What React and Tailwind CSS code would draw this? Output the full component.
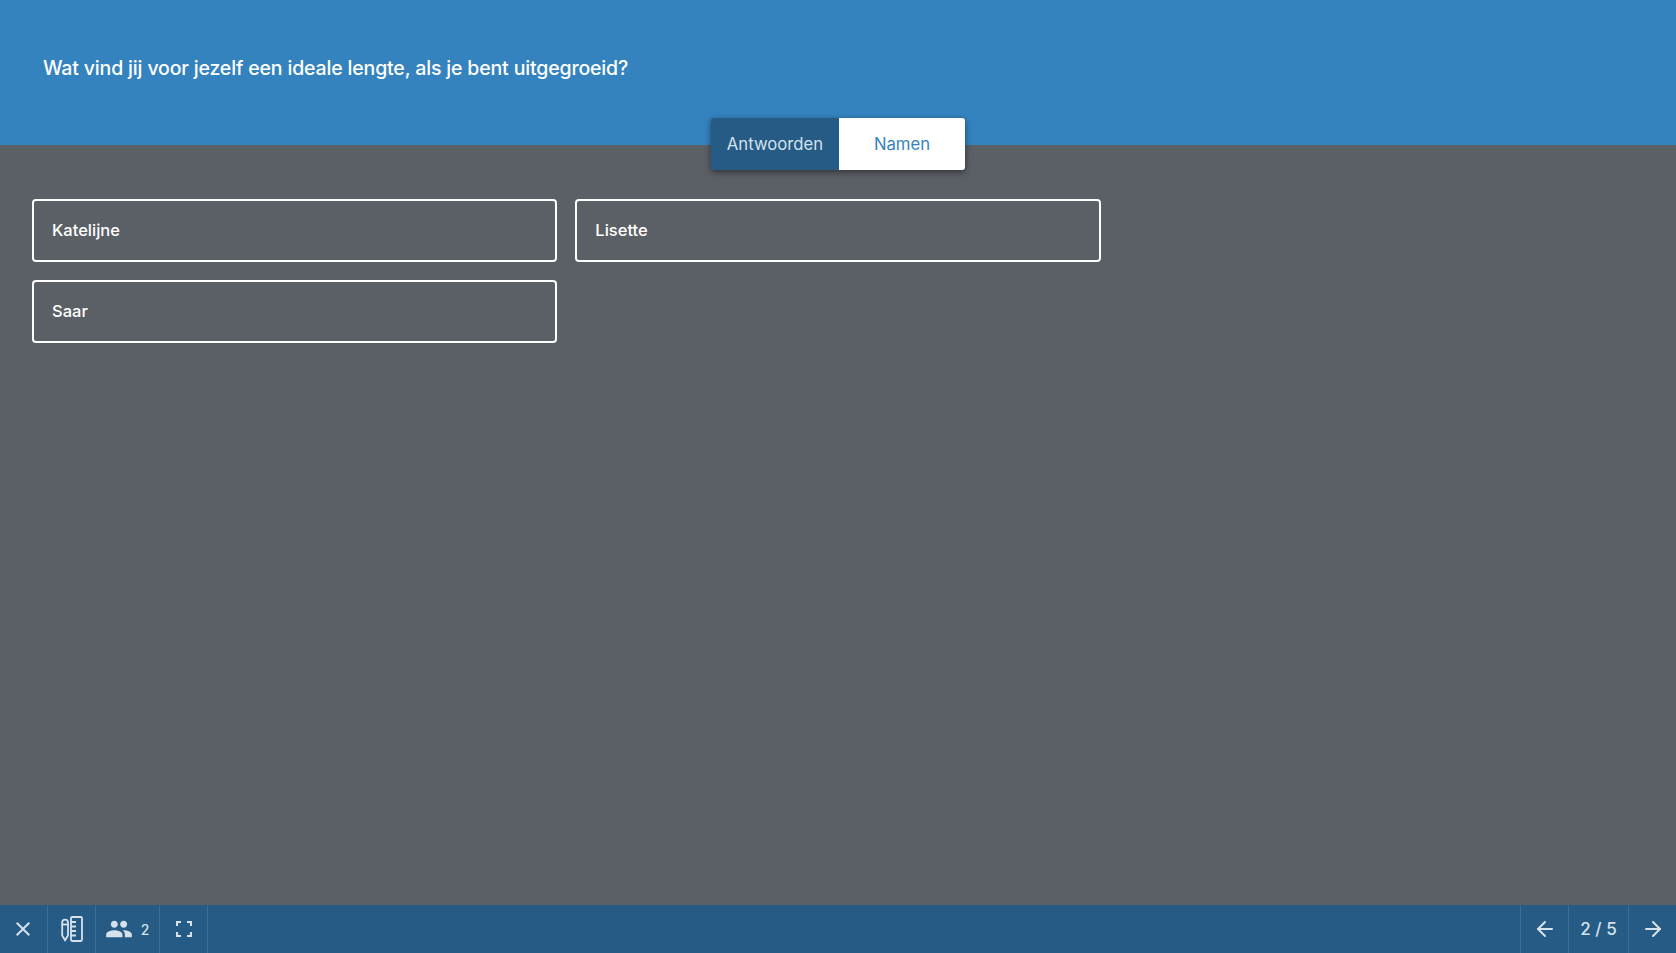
import React from 'react';
import { ArrowLeft, ArrowRight } from 'lucide-react';
import { MdClose, MdPeople } from 'react-icons/md';

const font = "font-['Inter','Noto_Sans',sans-serif]";

const PencilRuler = () => (
  <svg width="22" height="26" viewBox="0 0 22 26" fill="none" stroke="currentColor" strokeWidth="1.8">
    <path d="M1.2 6.5a2.9 2.9 0 0 1 5.8 0V19.5L4.1 24.2 1.2 19.5Z" />
    <path d="M1.2 8.5H7" />
    <rect x="10" y="1" width="11" height="24" rx="1.2" />
    <path d="M10 6h5M10 10.5h5M10 15h5M10 19.5h5" strokeWidth="2" />
  </svg>
);

const Corners = () => (
  <svg width="16" height="16" viewBox="0 0 16 16" fill="none" stroke="currentColor" strokeWidth="2.2">
    <path d="M1 5V1h4M11 1h4v4M15 11v4h-4M5 15H1v-4" />
  </svg>
);

const names = ['Katelijne', 'Lisette', 'Saar'];

export default function App() {
  return (
    <div className={`flex h-[953px] flex-col bg-[#5b5f66] text-white ${font}`}>
      <header className="relative h-[145px] shrink-0 bg-[#3483bf] pl-[43px] pt-[55px]">
        <h1 className="text-[19.5px] font-medium leading-[26px] tracking-[-0.16px]">
          Wat vind jij voor jezelf een ideale lengte, als je bent uitgegroeid?
        </h1>
        <div className="absolute left-[711px] top-[118px] flex h-[52px] w-[254px] overflow-hidden rounded-[3px] text-[16.7px] shadow-[0_2px_6px_rgba(0,0,0,0.5)]">
          <button className="w-[128px] bg-[#255b85] pt-[2px] text-[#d5e2ec]">Antwoorden</button>
          <button className="flex-1 bg-white pt-[2px] text-[#3483bf]">Namen</button>
        </div>
      </header>

      <main className="grid flex-1 grid-cols-3 content-start gap-[18px] px-[32px] pt-[54px]">
        {names.map((name, i) => (
          <div
            key={name}
            className={`flex h-[63px] items-center rounded-[4px] border-2 border-white pb-[1px] pl-[18px] text-[16.5px] font-medium ${i === 2 ? 'col-start-1' : ''}`}
          >
            {name}
          </div>
        ))}
      </main>

      <footer className="flex h-[48px] shrink-0 bg-[#255b85] text-[#d5e2ec]">
        <button className="flex w-[48px] items-center justify-center border-r border-[#3a6f98] pr-[1px]">
          <MdClose size={24} />
        </button>
        <button className="flex w-[48px] items-center justify-center border-r border-[#3a6f98]">
          <PencilRuler />
        </button>
        <button className="flex w-[64px] items-center justify-center gap-[8px] border-r border-[#3a6f98] pr-[1px] text-[14px] font-medium">
          <MdPeople size={28} />
          2
        </button>
        <button className="flex w-[48px] items-center justify-center border-r border-[#3a6f98]">
          <Corners />
        </button>
        <div className="flex-1" />
        <button className="flex w-[48px] items-center justify-center border-l border-[#3a6f98]">
          <ArrowLeft size={24} strokeWidth={2} />
        </button>
        <div className="flex w-[60px] items-center justify-center border-l border-[#3a6f98] pt-[1px] text-[17px] font-medium">
          2 / 5
        </div>
        <button className="flex w-[48px] items-center justify-center border-l border-[#3a6f98]">
          <ArrowRight size={24} strokeWidth={2} />
        </button>
      </footer>
    </div>
  );
}
